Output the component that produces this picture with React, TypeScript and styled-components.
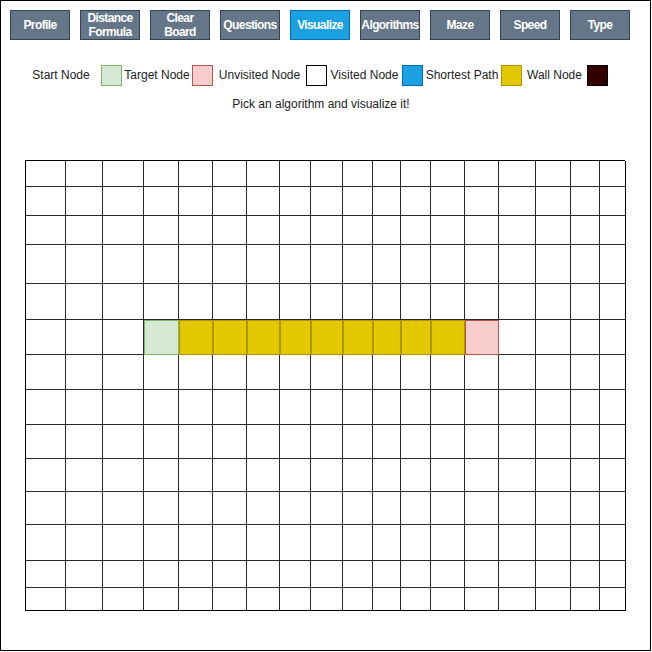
import * as React from 'react';
import styled, { createGlobalStyle } from 'styled-components';

type Kind = 'empty' | 'start' | 'target' | 'path';

const buttons = ['Profile', 'Distance Formula', 'Clear Board', 'Questions', 'Visualize', 'Algorithms', 'Maze', 'Speed', 'Type'];

const legend = [
  { label: 'Start Node', width: 80, fill: '#d5e8d4', stroke: '#82b366' },
  { label: 'Target Node', width: 70, fill: '#f8cecc', stroke: '#b85450' },
  { label: 'Unvisited Node', width: 93, fill: '#ffffff', stroke: '#000000' },
  { label: 'Visited Node', width: 75, fill: '#1ba1e2', stroke: '#006eaf' },
  { label: 'Shortest Path', width: 78, fill: '#e3c800', stroke: '#b09500' },
  { label: 'Wall Node', width: 65, fill: '#330000', stroke: '#000000' },
];

const colWidths = [40, 37, 41, 35, 34, 34, 33, 31, 32, 30, 28, 30, 34, 34, 37, 35, 29, 26];
const rowHeights = [26, 29, 29, 39, 36, 35, 35, 35, 34, 33, 33, 36, 27, 23];

const kindColors: Record<Kind, { fill: string; stroke: string }> = {
  empty: { fill: '#ffffff', stroke: '#2b2b2b' },
  start: { fill: '#d5e8d4', stroke: '#82b366' },
  target: { fill: '#f8cecc', stroke: '#b85450' },
  path: { fill: '#e3c800', stroke: '#b09500' },
};

const cellKind = (r: number, c: number): Kind => {
  if (r !== 5) return 'empty';
  if (c === 3) return 'start';
  if (c === 13) return 'target';
  if (c >= 4 && c <= 12) return 'path';
  return 'empty';
};

const App: React.FC = () => {
  return (
    <>
      <GlobalStyle />
      <Frame>
        <Toolbar>
          {buttons.map((b) => (
            <ToolButton key={b} $active={b === 'Visualize'}>
              {b}
            </ToolButton>
          ))}
        </Toolbar>
        <Legend>
          {legend.map((item) => (
            <LegendItem key={item.label}>
              <LegendLabel $width={item.width}>{item.label}</LegendLabel>
              <Swatch $fill={item.fill} $stroke={item.stroke} />
            </LegendItem>
          ))}
        </Legend>
        <Message>Pick an algorithm and visualize it!</Message>
        <Board>
          {rowHeights.map((_, r) =>
            colWidths.map((__, c) => <Cell key={`${r}-${c}`} $kind={cellKind(r, c)} />)
          )}
        </Board>
      </Frame>
    </>
  );
};

const GlobalStyle = createGlobalStyle`
  body {
    margin: 0;
    background: #ffffff;
    font-family: 'Liberation Sans', Arial, sans-serif;
  }
`;

const Frame = styled.div`
  width: 651px;
  height: 651px;
  box-sizing: border-box;
  border: 1px solid #000000;
  padding: 9px 0 0 9px;
`;

const Toolbar = styled.div`
  display: flex;
  gap: 10px;
`;

const ToolButton = styled.div<{ $active: boolean }>`
  width: 60px;
  height: 30px;
  box-sizing: border-box;
  display: flex;
  align-items: center;
  justify-content: center;
  text-align: center;
  background: ${(p) => (p.$active ? '#1ba1e2' : '#647687')};
  border: 1px solid ${(p) => (p.$active ? '#006eaf' : '#314354')};
  color: #ffffff;
  font-size: 12px;
  font-weight: bold;
  letter-spacing: -0.6px;
  line-height: 14px;
  white-space: pre-line;
`;

const Legend = styled.div`
  display: flex;
  margin-top: 25px;
  margin-left: 11px;
  height: 21px;
`;

const LegendItem = styled.div`
  display: flex;
  align-items: center;
`;

const LegendLabel = styled.div<{ $width: number }>`
  width: ${(p) => p.$width}px;
  margin-top: -2px;
  text-align: center;
  font-size: 12px;
  color: #222222;
  white-space: nowrap;
`;

const Swatch = styled.div<{ $fill: string; $stroke: string }>`
  width: 21px;
  height: 21px;
  box-sizing: border-box;
  background: ${(p) => p.$fill};
  border: 1px solid ${(p) => p.$stroke};
`;

const Message = styled.div`
  width: 622px;
  margin-top: 11px;
  text-align: center;
  font-size: 12px;
  line-height: 14px;
  color: #222222;
`;

const Board = styled.div`
  display: grid;
  grid-template-columns: ${colWidths.map((w) => `${w}px`).join(' ')};
  grid-template-rows: ${rowHeights.map((h) => `${h}px`).join(' ')};
  width: 600px;
  box-sizing: border-box;
  margin: 49px 0 0 15px;
  border-top: 1px solid #000000;
  border-left: 1px solid #000000;
`;

const Cell = styled.div<{ $kind: Kind }>`
  box-sizing: border-box;
  background: ${(p) => kindColors[p.$kind].fill};
  border-right: 1px solid ${(p) => kindColors[p.$kind].stroke};
  border-bottom: 1px solid ${(p) => kindColors[p.$kind].stroke};
  box-shadow: ${(p) => (p.$kind === 'empty' ? 'none' : `inset 1px 1px 0 ${kindColors[p.$kind].stroke}`)};

  &:nth-child(18n) {
    border-right-color: #000000;
  }
  &:nth-last-child(-n + 18) {
    border-bottom-color: #000000;
  }
`;

export default App;
